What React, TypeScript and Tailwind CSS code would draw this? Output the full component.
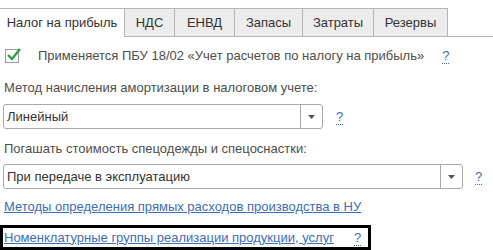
import React from "react";

const Q = () => (
  <span className="text-[#3c6db5] border-b border-dotted border-[#3c6db5] leading-[13px] text-[13px]">?</span>
);

const Select = ({ value, width }: { value: string; width: string }) => (
  <div className={`flex h-[25px] ${width} border border-[#a8a8a8] rounded-[3px] bg-white`}>
    <div className="flex-1 flex items-center pl-[3px] text-[#333333] whitespace-nowrap">{value}</div>
    <div className="w-[22px] border-l border-[#a8a8a8] flex items-center justify-center">
      <svg width="7" height="4" viewBox="0 0 7 4">
        <path d="M0 0 H7 L3.5 4 Z" fill="#555555" />
      </svg>
    </div>
  </div>
);

export default function App() {
  const tabs = [
    { t: "НДС", w: "w-[50px]" },
    { t: "ЕНВД", w: "w-[60px]" },
    { t: "Запасы", w: "w-[68px]" },
    { t: "Затраты", w: "w-[71px]" },
    { t: "Резервы", w: "w-[74px]" },
  ];
  return (
    <div
      className="w-[493px] h-[250px] bg-white overflow-hidden text-[13px] text-[#4d4d4d]"
      style={{ fontFamily: '"Liberation Sans", Arial, sans-serif' }}
    >
      {/* tabs */}
      <div className="flex items-end h-[37px]">
        <div className="w-[125px] h-[29px] border-t border-r border-[#b5b5b5] flex items-center justify-center text-[#333333] bg-white">
          Налог на прибыль
        </div>
        {tabs.map((x) => (
          <div
            key={x.t}
            className={`${x.w} h-[29px] border-t border-r border-b border-[#b5b5b5] bg-[#ececec] flex items-center justify-center text-[#333333]`}
          >
            {x.t}
          </div>
        ))}
        <div className="flex-1 h-[29px] border-b border-[#b5b5b5]" />
      </div>

      {/* checkbox row */}
      <div className="mt-[12px] h-[14px] flex items-center">
        <div className="ml-[5px] w-[14px] h-[14px] border border-[#9a9a9a] bg-white relative">
          <svg className="absolute left-[0px] top-[-3px]" width="16" height="16" viewBox="0 0 16 16">
            <path d="M2 8 L6 12 L14 2" stroke="#2ea043" strokeWidth="2.4" fill="none" />
          </svg>
        </div>
        <span className="ml-[19px] whitespace-nowrap">Применяется ПБУ 18/02 «Учет расчетов по налогу на прибыль»</span>
        <span className="ml-[18px]"><Q /></span>
      </div>

      {/* label 1 */}
      <div className="mt-[17px] h-[16px] flex items-center pl-[4px] whitespace-nowrap">
        Метод начисления амортизации в налоговом учете:
      </div>
      <div className="mt-[8px] ml-[3px] flex items-center">
        <Select value="Линейный" width="w-[320px]" />
        <span className="ml-[13px]"><Q /></span>
      </div>

      {/* label 2 */}
      <div className="mt-[12px] h-[16px] flex items-center pl-[4px] whitespace-nowrap">
        Погашать стоимость спецодежды и спецоснастки:
      </div>
      <div className="mt-[7px] ml-[3px] flex items-center">
        <Select value="При передаче в эксплуатацию" width="w-[460px]" />
        <span className="ml-[12px]"><Q /></span>
      </div>

      {/* link 1 */}
      <div className="mt-[10px] h-[16px] flex items-center pl-[4px] whitespace-nowrap">
        <span className="text-[#3c6db5] underline">Методы определения прямых расходов производства в НУ</span>
      </div>

      {/* boxed link */}
      <div className="mt-[10px] w-[371px] h-[25px] border-[3px] border-black flex items-center pl-[1px] whitespace-nowrap">
        <span className="text-[#3c6db5] underline">Номенклатурные группы реализации продукции, услуг</span>
        <span className="ml-[20px]"><Q /></span>
      </div>
    </div>
  );
}
